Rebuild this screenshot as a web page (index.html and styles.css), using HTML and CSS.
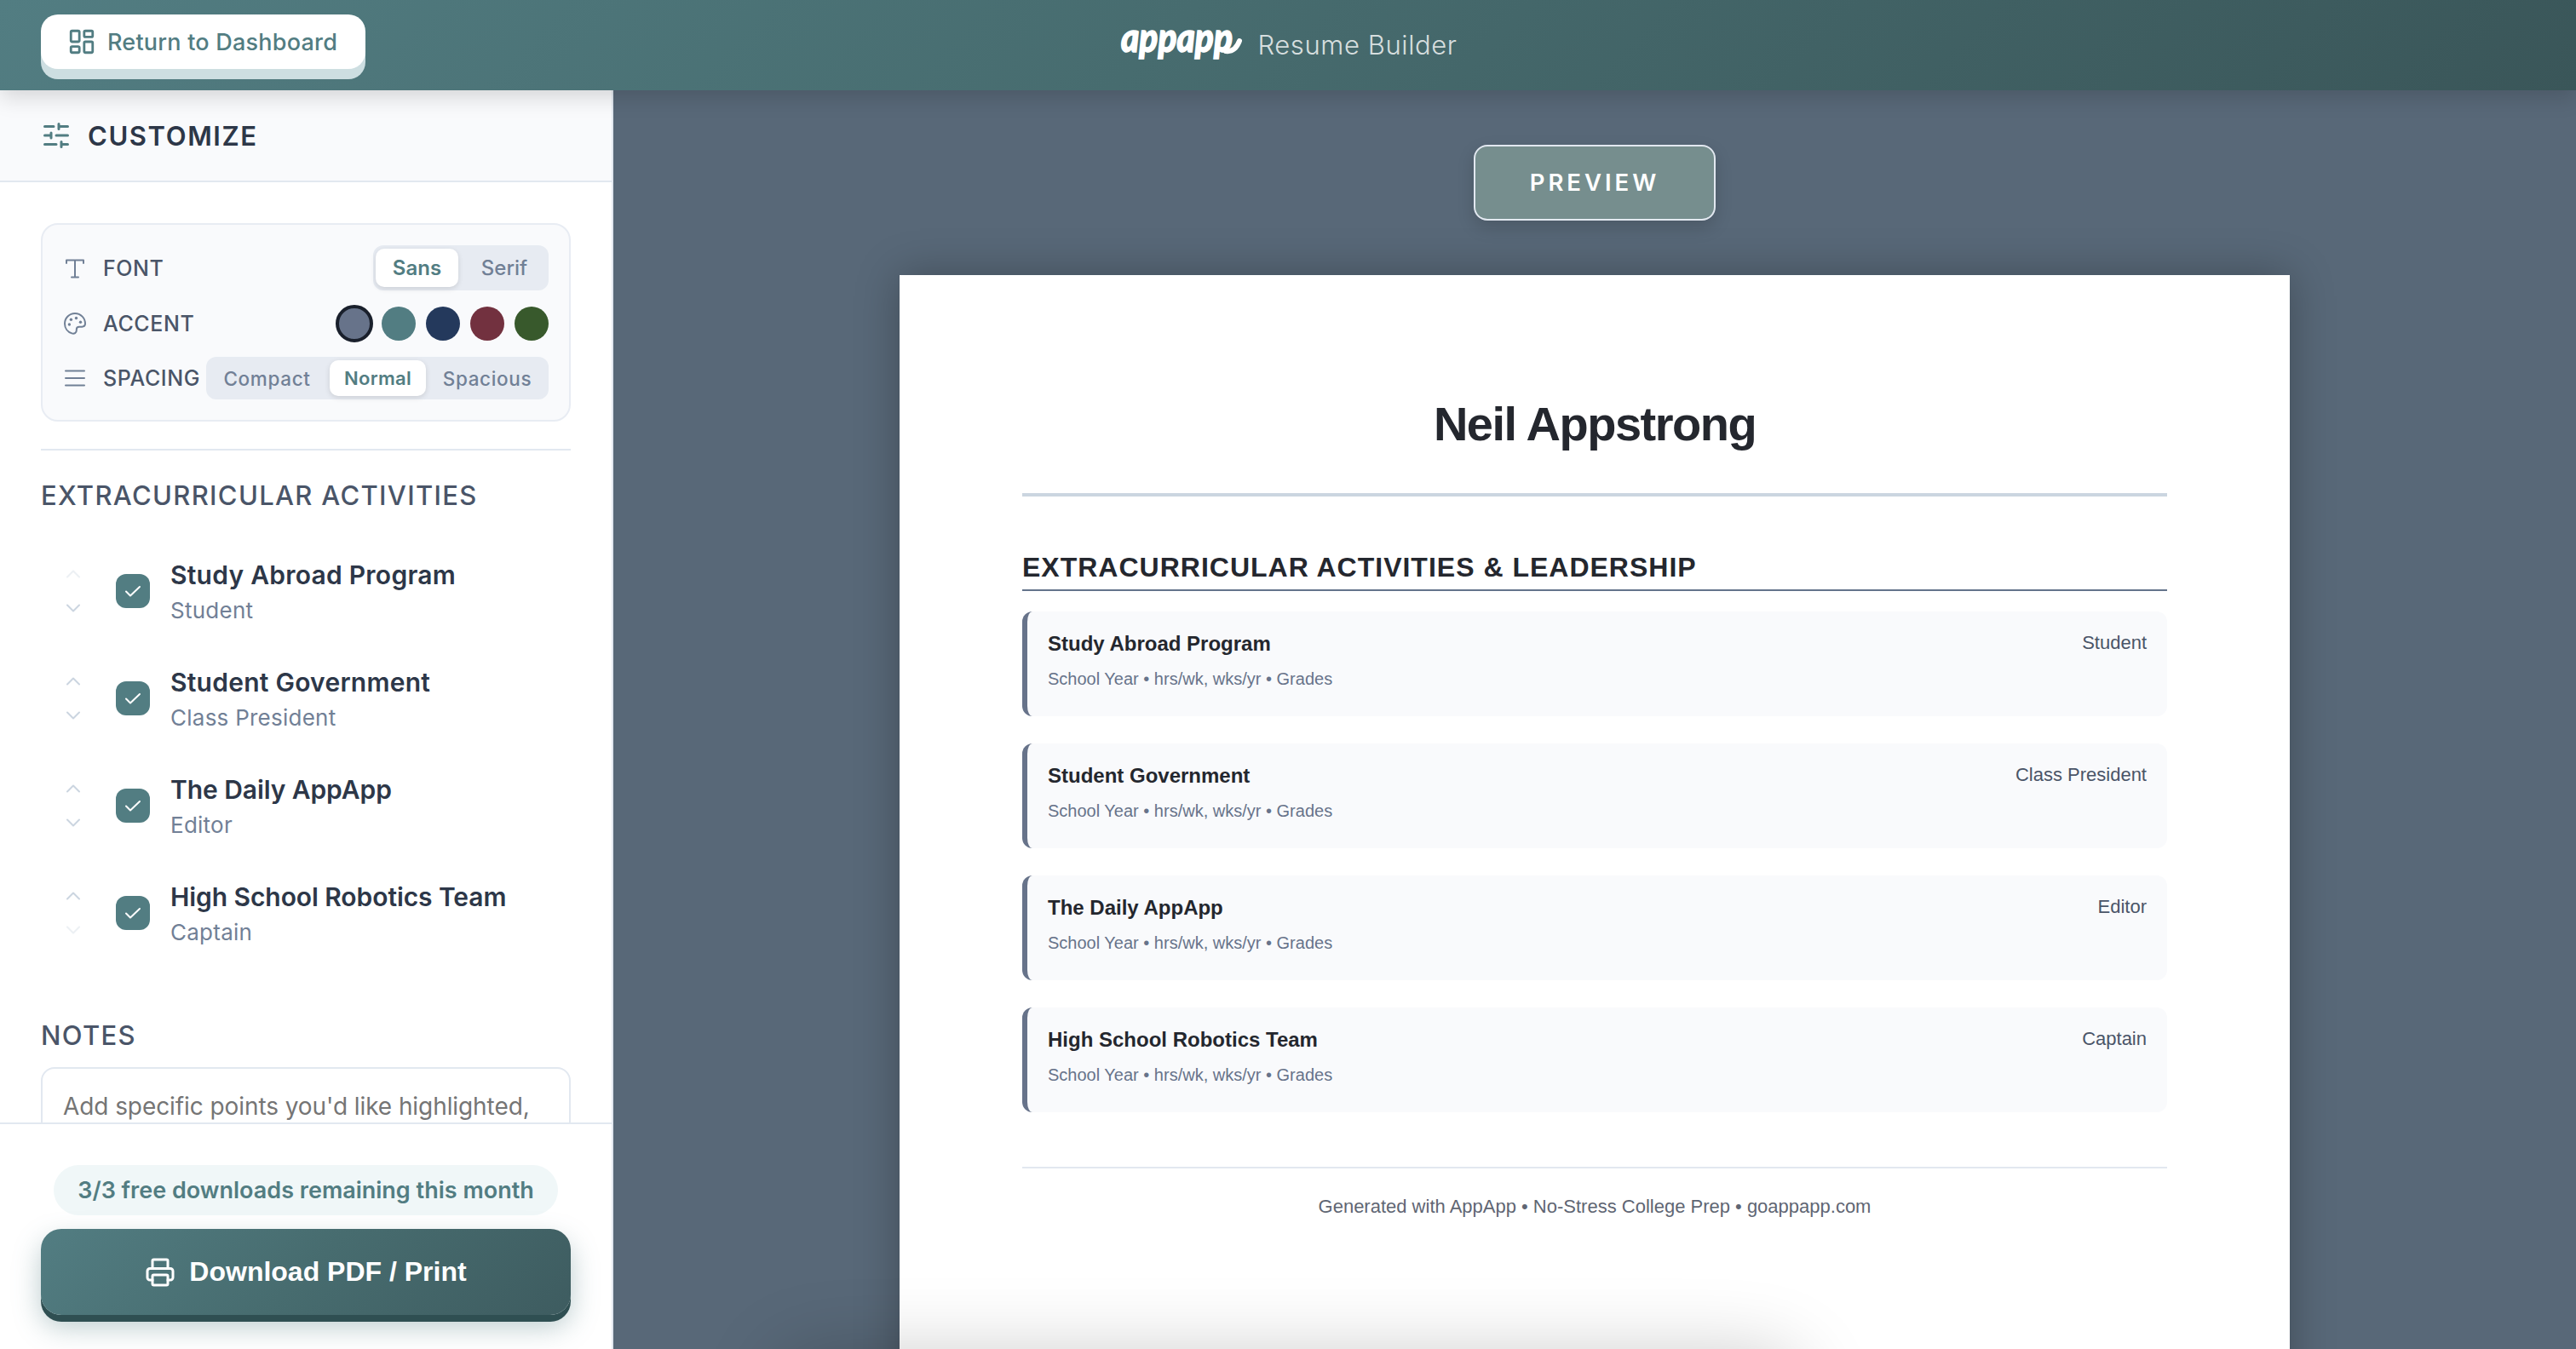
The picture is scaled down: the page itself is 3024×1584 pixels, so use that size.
FILE: index.html
```html
<!DOCTYPE html>
<html lang="en">
  <head>
    <meta charset="UTF-8" />
    <title>AppApp Resume Builder</title>
    <link rel="stylesheet" href="styles.css" />
  </head>
  <body>
    <header class="topbar">
      <button class="return-btn">
        <svg class="icon" viewBox="0 0 24 24" width="34" height="34">
          <rect x="3" y="3" width="7" height="9" rx="1" />
          <rect x="14" y="3" width="7" height="5" rx="1" />
          <rect x="14" y="12" width="7" height="9" rx="1" />
          <rect x="3" y="16" width="7" height="5" rx="1" />
        </svg>
        Return to Dashboard
      </button>
      <div class="brand">
        <svg class="logo" width="146" height="60" viewBox="0 0 146 60">
          <text x="3" y="38" textLength="131" lengthAdjust="spacingAndGlyphs">appapp</text>
          <path d="M126 37c8 1 13-4 16-12" />
        </svg>
        <span class="brand-name">Resume Builder</span>
      </div>
    </header>

    <div class="layout">
      <aside class="sidebar">
        <div class="sidebar-header">
          <svg class="icon" viewBox="0 0 24 24" width="36" height="36">
            <path d="M10 5H3M12 19H3M14 3v4M16 17v4M21 12h-9M21 19h-5M21 5h-7M8 10v4M8 12H3" />
          </svg>
          <h2>Customize</h2>
        </div>

        <div class="sidebar-content">
          <div class="options">
            <div class="option-row">
              <svg class="icon" viewBox="0 0 28 28" width="28" height="28">
                <path d="M4 8V4.500h20V8M14 4.500v20M10 24.500h8" />
              </svg>
              <span class="option-label">Font</span>
              <div class="segmented font-toggle">
                <button class="active">Sans</button>
                <button>Serif</button>
              </div>
            </div>
            <div class="option-row">
              <svg class="icon" viewBox="0 0 28 28" width="28" height="28">
                <path d="M14 2C7.400 2 2 7.400 2 14c0 5.300 3.500 9.800 8.300 11.400 2.900 1 5.500-.7 5.500-3.500v-1c0-1.800 1.400-3.200 3.200-3.200h3.400c1.900 0 3.300-1.200 3.600-3C26.400 7.500 20.600 2 14 2z" />
                <g class="dots">
                  <circle cx="15.500" cy="7.500" r="1.700" />
                  <circle cx="9.400" cy="9.200" r="1.700" />
                  <circle cx="7.400" cy="15" r="1.700" />
                  <circle cx="20.500" cy="12.300" r="1.700" />
                </g>
              </svg>
              <span class="option-label">Accent</span>
              <div class="swatches">
                <span class="swatch slate active"></span>
                <span class="swatch teal"></span>
                <span class="swatch navy"></span>
                <span class="swatch wine"></span>
                <span class="swatch green"></span>
              </div>
            </div>
            <div class="option-row">
              <svg class="icon" viewBox="0 0 28 28" width="28" height="28">
                <path d="M3 5.500h22M3 14h22M3 22.500h22" />
              </svg>
              <span class="option-label">Spacing</span>
              <div class="segmented spacing-toggle">
                <button>Compact</button>
                <button class="active">Normal</button>
                <button>Spacious</button>
              </div>
            </div>
          </div>

          <hr />

          <h3>Extracurricular Activities</h3>
          <ul class="activities">
            <li>
              <div class="arrows">
                <svg class="off" viewBox="0 0 20 12"><path d="M3 9.500l7-7 7 7" /></svg>
                <svg viewBox="0 0 20 12"><path d="M3 2.500l7 7 7-7" /></svg>
              </div>
              <span class="check"><svg viewBox="0 0 20 20"><path d="M2 10.500l5 5L18 5" /></svg></span>
              <div class="activity-text">
                <strong class="wide">Study Abroad Program</strong>
                <span>Student</span>
              </div>
            </li>
            <li>
              <div class="arrows">
                <svg viewBox="0 0 20 12"><path d="M3 9.500l7-7 7 7" /></svg>
                <svg viewBox="0 0 20 12"><path d="M3 2.500l7 7 7-7" /></svg>
              </div>
              <span class="check"><svg viewBox="0 0 20 20"><path d="M2 10.500l5 5L18 5" /></svg></span>
              <div class="activity-text">
                <strong class="wide">Student Government</strong>
                <span>Class President</span>
              </div>
            </li>
            <li>
              <div class="arrows">
                <svg viewBox="0 0 20 12"><path d="M3 9.500l7-7 7 7" /></svg>
                <svg viewBox="0 0 20 12"><path d="M3 2.500l7 7 7-7" /></svg>
              </div>
              <span class="check"><svg viewBox="0 0 20 20"><path d="M2 10.500l5 5L18 5" /></svg></span>
              <div class="activity-text">
                <strong>The Daily AppApp</strong>
                <span>Editor</span>
              </div>
            </li>
            <li>
              <div class="arrows">
                <svg viewBox="0 0 20 12"><path d="M3 9.500l7-7 7 7" /></svg>
                <svg class="off" viewBox="0 0 20 12"><path d="M3 2.500l7 7 7-7" /></svg>
              </div>
              <span class="check"><svg viewBox="0 0 20 20"><path d="M2 10.500l5 5L18 5" /></svg></span>
              <div class="activity-text">
                <strong>High School Robotics Team</strong>
                <span>Captain</span>
              </div>
            </li>
          </ul>

          <h3 class="notes-title">Notes</h3>
          <div class="notes">Add specific points you'd like highlighted,</div>
        </div>

        <div class="sidebar-footer">
          <span class="quota">3/3 free downloads remaining this month</span>
          <button class="download-btn">
            <svg class="icon" viewBox="0 0 24 24" width="36" height="36">
              <path d="M6 18H4a2 2 0 0 1-2-2v-5a2 2 0 0 1 2-2h16a2 2 0 0 1 2 2v5a2 2 0 0 1-2 2h-2" />
              <path d="M6 9V3a1 1 0 0 1 1-1h10a1 1 0 0 1 1 1v6" />
              <rect x="6" y="14" width="12" height="8" rx="1" />
            </svg>
            Download PDF / Print
          </button>
        </div>
      </aside>

      <main class="preview">
        <div class="preview-badge">PREVIEW</div>
        <article class="paper">
          <h1>Neil Appstrong</h1>
          <h2>Extracurricular Activities &amp; Leadership</h2>
          <div class="entries">
            <section class="entry">
              <div class="entry-head"><strong>Study Abroad Program</strong><span>Student</span></div>
              <p>School Year • hrs/wk, wks/yr • Grades</p>
            </section>
            <section class="entry">
              <div class="entry-head"><strong>Student Government</strong><span>Class President</span></div>
              <p>School Year • hrs/wk, wks/yr • Grades</p>
            </section>
            <section class="entry">
              <div class="entry-head"><strong>The Daily AppApp</strong><span>Editor</span></div>
              <p>School Year • hrs/wk, wks/yr • Grades</p>
            </section>
            <section class="entry">
              <div class="entry-head"><strong>High School Robotics Team</strong><span>Captain</span></div>
              <p>School Year • hrs/wk, wks/yr • Grades</p>
            </section>
          </div>
          <footer>Generated with AppApp • No-Stress College Prep • goappapp.com</footer>
        </article>
      </main>
    </div>
    <div class="bottom-shade"></div>
  </body>
</html>
```
FILE: styles.css
```css
* {
  box-sizing: border-box;
  margin: 0;
  padding: 0;
}
html {
  overflow: hidden;
}
body {
  position: relative;
  height: 100vh;
  display: flex;
  flex-direction: column;
  overflow: hidden;
  background: #586878;
  font-family: Inter, "Liberation Sans", sans-serif;
}
button {
  border: none;
  background: none;
  font-family: inherit;
  cursor: pointer;
}
.icon {
  flex: none;
  fill: none;
  stroke: currentColor;
  stroke-width: 2;
  stroke-linecap: round;
  stroke-linejoin: round;
}

/* Top bar */
.topbar {
  position: relative;
  z-index: 2;
  flex: none;
  height: 106px;
  padding: 0 48px;
  display: grid;
  grid-template-columns: 1fr auto 1fr;
  align-items: center;
  background: linear-gradient(135deg, #527d82 0%, #476c6f 45%, #3a5659 100%);
  box-shadow: 0 8px 24px rgba(0, 0, 0, 0.15);
}
.return-btn {
  justify-self: start;
  width: 381px;
  height: 64px;
  margin-bottom: 8px;
  padding-left: 31px;
  display: flex;
  align-items: center;
  gap: 13px;
  border-radius: 20px;
  background: #fff;
  color: #527d82;
  font-size: 27px;
  font-weight: 500;
  letter-spacing: 0.22px;
  box-shadow: 0 12px 0 #cddee1;
}
.brand {
  display: flex;
  align-items: center;
  gap: 17px;
}
.logo {
  flex: none;
  overflow: visible;
}
.logo text {
  fill: #fff;
  stroke: #fff;
  stroke-width: 1.5;
  font-family: Lato, sans-serif;
  font-size: 48px;
  font-style: italic;
  font-weight: 900;
}
.logo path {
  fill: none;
  stroke: #fff;
  stroke-width: 6;
  stroke-linecap: round;
}
.brand-name {
  margin-bottom: 2px;
  color: rgba(255, 255, 255, 0.8);
  font-size: 31px;
  font-weight: 300;
  letter-spacing: 0.6px;
}

.layout {
  flex: 1;
  min-height: 0;
  display: flex;
}

/* Sidebar */
.sidebar {
  width: 720px;
  flex: none;
  display: flex;
  flex-direction: column;
  background: #fff;
  border-right: 2px solid #e2e8f0;
}
.sidebar-header {
  flex: none;
  height: 108px;
  padding: 0 48px;
  display: flex;
  align-items: center;
  gap: 19px;
  color: #527d82;
  background: #f9fafc;
  border-bottom: 2px solid #e2e8f0;
}
.sidebar-header h2 {
  color: #2d3748;
  font-size: 31px;
  font-weight: 600;
  letter-spacing: 1.6px;
  text-transform: uppercase;
}
.sidebar-content {
  flex: 1;
  min-height: 0;
  overflow: hidden;
  padding: 48px 48px 0;
}
.options {
  padding: 24px;
  display: flex;
  flex-direction: column;
  gap: 17px;
  background: #f9fafc;
  border: 2px solid #e8ecf3;
  border-radius: 20px;
}
.option-row {
  display: flex;
  align-items: center;
  color: #718096;
}
.option-label {
  margin-left: 19px;
  color: #4a5568;
  font-size: 25px;
  font-weight: 500;
  letter-spacing: 0.6px;
  text-transform: uppercase;
}
.segmented {
  margin-left: auto;
  padding: 4px;
  display: flex;
  background: #e7ebf2;
  border-radius: 12px;
}
.segmented button {
  height: 45px;
  border-radius: 10px;
  color: #718096;
  font-size: 24px;
  font-weight: 500;
}
.segmented .active {
  background: #fff;
  color: #527d82;
  font-weight: 600;
  box-shadow: 0 2px 6px rgba(0, 0, 0, 0.12);
}
.font-toggle {
  width: 206px;
  padding-left: 3px;
}
.font-toggle button {
  width: 97px;
}
.font-toggle button + button {
  width: 102px;
  padding-left: 6px;
}
.spacing-toggle {
  width: 402px;
}
.spacing-toggle button {
  flex: 1;
  height: 42px;
  font-size: 22.5px;
  letter-spacing: 0.65px;
}
.spacing-toggle .active {
  flex: 0 0 113px;
  font-size: 22px;
  letter-spacing: 0.3px;
}
.spacing-toggle button:first-child {
  flex: 0 0 141px;
  padding-right: 6px;
}
.spacing-toggle button:last-child {
  padding-left: 4px;
}
.swatches {
  margin-left: auto;
  display: flex;
  align-items: center;
  gap: 12px;
}
.swatch {
  width: 40px;
  height: 40px;
  border-radius: 50%;
}
.swatch.active {
  width: 44px;
  height: 44px;
  margin-right: -2px;
  border: 4px solid #1a202c;
}
.slate { background: #67738a; }
.teal { background: #527d82; }
.navy { background: #24395c; }
.wine { background: #72313f; }
.green { background: #38592c; }
.dots {
  fill: currentColor;
  stroke: none;
}
hr {
  height: 2px;
  margin: 32px 0;
  border: none;
  background: #e2e8f0;
}
h3 {
  padding-top: 1px;
  color: #4a5568;
  font-size: 31px;
  font-weight: 500;
  line-height: 40px;
  letter-spacing: 1.32px;
  text-transform: uppercase;
}
.activities {
  margin-top: 29px;
  list-style: none;
}
.activities li {
  height: 126px;
  padding-left: 28px;
  display: flex;
  align-items: center;
}
.arrows {
  width: 20px;
  margin-right: 40px;
  display: flex;
  flex-direction: column;
  gap: 28px;
}
.arrows svg {
  width: 20px;
  height: 12px;
  fill: none;
  stroke: #cbd5e0;
  stroke-width: 2;
  stroke-linecap: round;
  stroke-linejoin: round;
}
.arrows .off {
  opacity: 0.35;
}
.check {
  width: 40px;
  height: 40px;
  margin-right: 24px;
  display: flex;
  align-items: center;
  justify-content: center;
  background: #527d82;
  border-radius: 12px;
}
.check svg {
  width: 20px;
  height: 20px;
  fill: none;
  stroke: #fff;
  stroke-width: 2;
  stroke-linecap: round;
  stroke-linejoin: round;
}
.activity-text {
  padding-top: 3px;
  display: flex;
  flex-direction: column;
  line-height: 41px;
}
.activity-text strong {
  color: #2d3748;
  font-size: 30px;
  font-weight: 600;
  letter-spacing: -0.08px;
}
.activity-text .wide {
  letter-spacing: 0.25px;
}
.activity-text span {
  color: #718096;
  font-size: 26px;
  letter-spacing: 0.25px;
}
.notes-title {
  margin-top: 60px;
}
.notes {
  height: 200px;
  margin-top: 17px;
  padding: 24px;
  border: 2px solid #e2e8f0;
  border-radius: 16px;
  color: #757575;
  font-size: 28px;
  line-height: 40px;
  letter-spacing: -0.08px;
  white-space: nowrap;
}
.sidebar-footer {
  flex: none;
  height: 266px;
  padding: 48px 48px 0;
  display: flex;
  flex-direction: column;
  align-items: center;
  border-top: 2px solid #e2e8f0;
}
.quota {
  width: 592px;
  flex: none;
  border-radius: 30px;
  background: #f0f7f8;
  color: #527d82;
  font-size: 27px;
  font-weight: 600;
  line-height: 59px;
  text-align: center;
}
.download-btn {
  width: 100%;
  height: 101px;
  margin-top: 16px;
  display: flex;
  align-items: center;
  justify-content: center;
  gap: 16px;
  border-radius: 24px;
  background: linear-gradient(135deg, #527d82 0%, #476c6f 50%, #3e5c60 100%);
  color: #fff;
  font-family: "Liberation Sans", Arial, sans-serif;
  font-size: 32px;
  font-weight: 700;
  box-shadow: 0 8px 0 #2f4f52, 0 14px 32px rgba(82, 125, 130, 0.4);
}

/* Preview */
.preview {
  flex: 1;
  min-width: 0;
  padding-top: 64px;
  display: flex;
  flex-direction: column;
  align-items: center;
  overflow: hidden;
}
.preview-badge {
  width: 284px;
  height: 89px;
  flex: none;
  border: 2px solid #e2e8f0;
  border-radius: 16px;
  background: #768e8e;
  color: #fff;
  font-size: 27.5px;
  font-weight: 600;
  line-height: 85px;
  letter-spacing: 4px;
  text-align: center;
  box-shadow: 0 8px 20px rgba(0, 0, 0, 0.15);
}
.paper {
  width: 1632px;
  height: 2112px;
  flex: none;
  margin-top: 64px;
  padding: 144px;
  background: #fff;
  font-family: "Liberation Sans", Arial, sans-serif;
  box-shadow: 0 0 48px rgba(0, 0, 0, 0.28);
}
.paper h1 {
  padding-bottom: 50px;
  border-bottom: 4px solid #cbd5e0;
  color: #24272e;
  font-size: 56px;
  line-height: 62px;
  letter-spacing: -1.5px;
  text-align: center;
}
.paper h2 {
  margin: 63px 0 24px;
  padding-bottom: 6px;
  border-bottom: 2px solid #64748b;
  color: #24272e;
  font-size: 32px;
  line-height: 40px;
  letter-spacing: 1px;
  text-transform: uppercase;
}
.entries {
  display: flex;
  flex-direction: column;
  gap: 32px;
}
.entry {
  height: 123px;
  padding: 24px;
  border-left: 6px solid #67738a;
  border-radius: 12px;
  background: #f9fafc;
}
.entry-head {
  display: flex;
  justify-content: space-between;
  line-height: 28px;
}
.entry-head strong {
  color: #24272e;
  font-size: 24px;
}
.entry-head span {
  color: #4a5568;
  font-size: 22px;
  line-height: 26px;
}
.entry p {
  margin-top: 13px;
  color: #67738a;
  font-size: 20px;
  line-height: 28px;
}
.paper footer {
  margin-top: 64px;
  padding-top: 31px;
  border-top: 2px solid #e2e8f0;
  color: #5f6673;
  font-size: 22px;
  line-height: 28px;
  text-align: center;
}

/* soft shade rising from the bottom edge */
.bottom-shade {
  position: absolute;
  left: 914px;
  bottom: -168px;
  width: 1196px;
  height: 160px;
  border-radius: 40px;
  box-shadow: 0 0 90px rgba(0, 0, 0, 0.22);
  pointer-events: none;
}
```
